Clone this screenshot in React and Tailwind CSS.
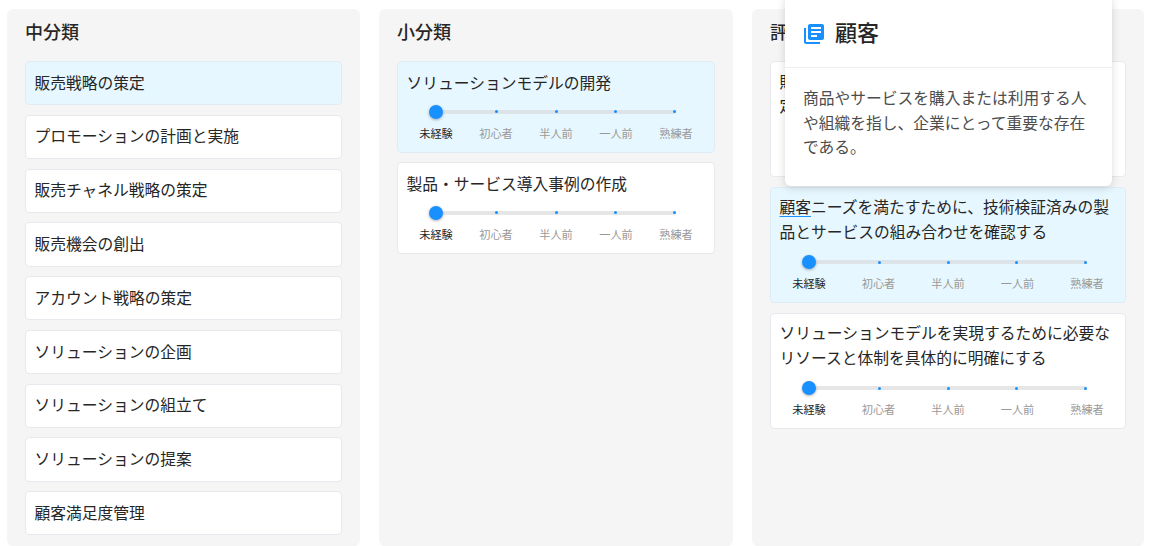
import React from "react";
import { MdLibraryBooks } from "react-icons/md";

const FONT = "font-['Roboto','Noto_Sans_CJK_JP',sans-serif]";

const MIDDLE = [
  "販売戦略の策定",
  "プロモーションの計画と実施",
  "販売チャネル戦略の策定",
  "販売機会の創出",
  "アカウント戦略の策定",
  "ソリューションの企画",
  "ソリューションの組立て",
  "ソリューションの提案",
  "顧客満足度管理",
];

const LEVELS = ["未経験", "初心者", "半人前", "一人前", "熟練者"];

const Panel = ({ title, className, children }) => (
  <section className={`bg-[#f5f5f5] rounded-md px-[18px] h-full overflow-hidden ${className}`}>
    <h2 className="text-[18px] font-medium leading-[26px] pt-[11px] pb-[15px] text-[#262626]">{title}</h2>
    <div className="flex flex-col gap-[9.6px]">{children}</div>
  </section>
);

const Card = ({ active, children }) => (
  <div
    className={`rounded-[4px] border pl-[8.5px] pr-[9px] pt-[8.6px] pb-[8.6px] text-[15.75px] leading-[25px] text-[#262626] ${
      active ? "bg-[#e6f7ff] border-[#e0ecf5]" : "bg-white border-[#e8e8ee]"
    }`}
  >
    {children}
  </div>
);

const LevelSlider = ({ active }) => (
  <div className="ml-[29.5px] mr-[29px] mt-[14.1px] mb-[0.4px]">
    <div className={`relative h-[4px] rounded-full flex justify-between items-center ${active ? "bg-[#dce3e9]" : "bg-[#e6e6e6]"}`}>
      {LEVELS.map((l) => (
        <span key={l} className="w-[3px] h-[3px] rounded-full bg-[#1890ff]" />
      ))}
      <span className="absolute -left-[7px] -top-[5px] w-[14px] h-[14px] rounded-full bg-[#1890ff] shadow-[0_1px_3px_rgba(0,0,0,0.3)]" />
    </div>
    <div className="flex justify-between mt-[13px] text-[11.2px] leading-[16px] text-[#999999]">
      {LEVELS.map((l, i) => (
        <span key={l} className={`w-0 flex justify-center whitespace-nowrap ${i === 0 ? "text-[#262626]" : ""}`}>
          {l}
        </span>
      ))}
    </div>
  </div>
);

export default function App() {
  return (
    <div className={`relative h-screen overflow-hidden bg-white pt-[9px] pl-[7px] pr-[12px] flex gap-[19px] ${FONT}`}>
      <Panel title="中分類" className="w-[353px] shrink-0">
        {MIDDLE.map((m, i) => (
          <Card key={m} active={i === 0}>{m}</Card>
        ))}
      </Panel>

      <Panel title="小分類" className="w-[354px] shrink-0">
        <Card active>
          ソリューションモデルの開発
          <LevelSlider active />
        </Card>
        <Card>
          製品・サービス導入事例の作成
          <LevelSlider />
        </Card>
      </Panel>

      <Panel title="評価項目" className="flex-1">
        <Card>
          <div className="leading-[24.8px]">販売戦略に基づき、提案する製品とサービスを定める</div>
          <LevelSlider />
        </Card>
        <Card active>
          <div className="leading-[24.8px]">
            <span className="underline decoration-[#1890ff] decoration-1 underline-offset-[3px] [text-decoration-skip-ink:none]">顧客</span>
            ニーズを満たすために、技術検証済みの製品とサービスの組み合わせを確認する
          </div>
          <LevelSlider active />
        </Card>
        <Card>
          <div className="leading-[24.8px]">ソリューションモデルを実現するために必要なリソースと体制を具体的に明確にする</div>
          <LevelSlider />
        </Card>
      </Panel>

      <div className="absolute left-[785px] -top-[6px] w-[327px] h-[192px] bg-white rounded-md shadow-[0_2px_8px_rgba(0,0,0,0.15)]">
        <div className="h-[74px] border-b border-[#eeeeee] flex items-center pl-[17px] pt-[6px] gap-[9px]">
          <MdLibraryBooks size={24} className="text-[#1890ff]" />
          <span className="text-[22px] font-medium text-[#262626]">顧客</span>
        </div>
        <p className="px-[18px] pt-[19px] text-[15.75px] leading-[24.6px] text-[#4d4d4d]">
          商品やサービスを購入または利用する人や組織を指し、企業にとって重要な存在である。
        </p>
      </div>
    </div>
  );
}
